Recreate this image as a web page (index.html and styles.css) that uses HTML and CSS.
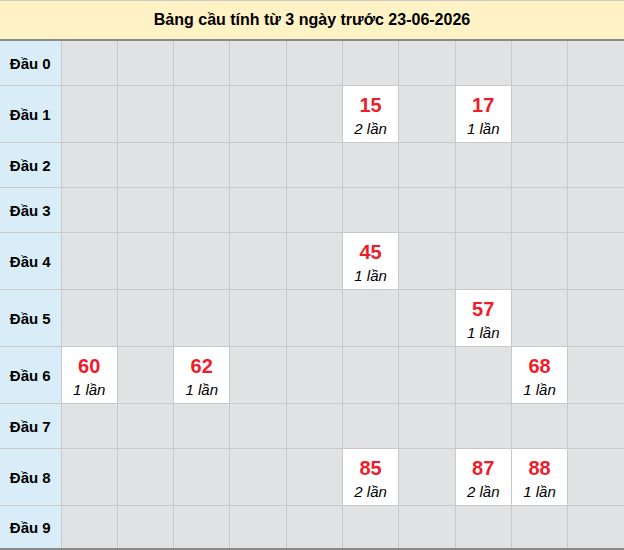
FILE: index.html
```html
<!DOCTYPE html>
<html lang="vi">
<head>
<meta charset="utf-8">
<link rel="stylesheet" href="styles.css">
</head>
<body>
<table class="cau">
  <colgroup>
    <col class="col-dau">
    <col span="10">
  </colgroup>
  <thead>
    <tr><th class="title" colspan="11">Bảng cầu tính từ 3 ngày trước 23-06-2026</th></tr>
  </thead>
  <tbody>
    <tr class="row-empty"><th class="dau">Đầu 0</th><td></td><td></td><td></td><td></td><td></td><td></td><td></td><td></td><td></td><td></td></tr>
    <tr class="row-hit"><th class="dau">Đầu 1</th><td></td><td></td><td></td><td></td><td></td><td class="hit"><b>15</b><i>2 lần</i></td><td></td><td class="hit"><b>17</b><i>1 lần</i></td><td></td><td></td></tr>
    <tr class="row-empty"><th class="dau">Đầu 2</th><td></td><td></td><td></td><td></td><td></td><td></td><td></td><td></td><td></td><td></td></tr>
    <tr class="row-empty"><th class="dau">Đầu 3</th><td></td><td></td><td></td><td></td><td></td><td></td><td></td><td></td><td></td><td></td></tr>
    <tr class="row-hit"><th class="dau">Đầu 4</th><td></td><td></td><td></td><td></td><td></td><td class="hit"><b>45</b><i>1 lần</i></td><td></td><td></td><td></td><td></td></tr>
    <tr class="row-hit"><th class="dau">Đầu 5</th><td></td><td></td><td></td><td></td><td></td><td></td><td></td><td class="hit"><b>57</b><i>1 lần</i></td><td></td><td></td></tr>
    <tr class="row-hit"><th class="dau">Đầu 6</th><td class="hit"><b>60</b><i>1 lần</i></td><td></td><td class="hit"><b>62</b><i>1 lần</i></td><td></td><td></td><td></td><td></td><td></td><td class="hit"><b>68</b><i>1 lần</i></td><td></td></tr>
    <tr class="row-empty"><th class="dau">Đầu 7</th><td></td><td></td><td></td><td></td><td></td><td></td><td></td><td></td><td></td><td></td></tr>
    <tr class="row-hit"><th class="dau">Đầu 8</th><td></td><td></td><td></td><td></td><td></td><td class="hit"><b>85</b><i>2 lần</i></td><td></td><td class="hit"><b>87</b><i>2 lần</i></td><td class="hit"><b>88</b><i>1 lần</i></td><td></td></tr>
    <tr class="row-empty row-last"><th class="dau">Đầu 9</th><td></td><td></td><td></td><td></td><td></td><td></td><td></td><td></td><td></td><td></td></tr>
  </tbody>
</table>
</body>
</html>
```

FILE: styles.css
```css
html, body {
  margin: 0;
  padding: 0;
  background: #ffffff;
}

.cau {
  width: 624px;
  border-collapse: collapse;
  table-layout: fixed;
  font-family: "Liberation Sans", Arial, sans-serif;
  color: #000;
}

.col-dau {
  width: 61px;
}

.cau th, .cau td {
  padding: 0;
  border: 1px solid #c9c9c9;
}

.title {
  height: 38px;
  background: #fff2c4;
  border-top: 1px solid #dcdcdc;
  border-bottom: 2px solid #8a8a8a !important;
  border-left: none !important;
  border-right: none !important;
  font-size: 16px;
  font-weight: bold;
  text-align: center;
  vertical-align: middle;
}

.dau {
  background: #d8edf7;
  font-size: 15px;
  font-weight: bold;
  text-align: center;
  border-left: none !important;
}

.cau td {
  background: #e1e2e4;
  text-align: center;
  vertical-align: middle;
}

.cau tr td:last-child {
  border-right: none;
}

.row-empty th, .row-empty td {
  height: 44px;
}

.row-hit th, .row-hit td {
  height: 56px;
}

.row-last th, .row-last td {
  height: 42px;
  border-bottom: 2px solid #8a8a8a;
}

.cau td.hit {
  background: #ffffff;
  vertical-align: top;
}

.hit b {
  display: block;
  margin-top: 8px;
  color: #ef1c2b;
  font-size: 20px;
  font-weight: bold;
  line-height: 22px;
}

.hit i {
  display: block;
  font-size: 15px;
  font-style: italic;
  line-height: 18px;
  margin-top: 4px;
}
```
